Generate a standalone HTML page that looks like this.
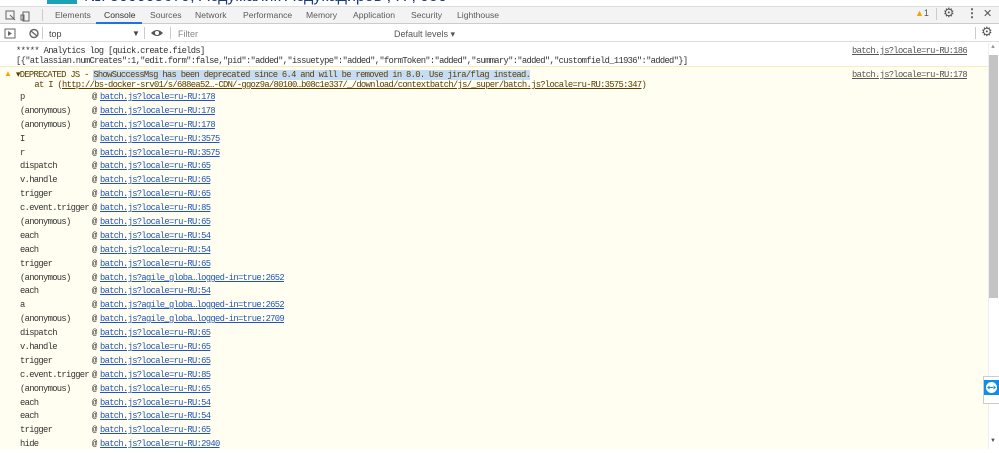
<!DOCTYPE html>
<html><head><meta charset="utf-8"><style>
*{margin:0;padding:0;box-sizing:border-box}
body{width:999px;height:449px;overflow:hidden;background:#fff;font-family:"Liberation Sans",sans-serif;position:relative}
.abs{position:absolute}
.tab{position:absolute;top:10px;font-size:8.6px;color:#5a5a5a}
.mono{font-family:"Liberation Mono",monospace;font-size:8.8px;letter-spacing:-0.68px;color:#333;white-space:pre}
a{color:#2255bb;text-decoration:underline}
.lnk{color:#555;text-decoration:underline}
.row{position:absolute;left:0;height:14px}
.row .n{position:absolute;left:20px}
.row .at{position:absolute;left:92px}
.row .l{position:absolute;left:100px}
</style></head><body>
<div class="abs" style="left:0;top:0;width:999px;height:6px;overflow:hidden;background:#fff">
 <div class="abs" style="left:47px;top:-2px;width:30px;height:6px;background:#1aa3b5"></div>
 <div class="abs" style="left:84px;top:-12px;font-size:16px;color:#1b3a7a;white-space:nowrap">№: 500005679, Абдумалик Абдукадиров ; П ; 990</div>
</div>
<div class="abs" style="left:0;top:6px;width:999px;height:18px;background:#f3f3f3;border-top:1px solid #ddd;border-bottom:1px solid #ccc"></div>
<svg class="abs" style="left:5px;top:9px" width="30" height="13"><rect x="1" y="2" width="8" height="8" fill="none" stroke="#666"/><path d="M5 6 L10 11" stroke="#666"/><rect x="18" y="3" width="6" height="9" fill="none" stroke="#666"/><rect x="16" y="6" width="3" height="5" fill="none" stroke="#666"/></svg>
<div class="abs" style="left:42px;top:9px;width:1px;height:12px;background:#ccc"></div>
<div class="tab" style="left:55px">Elements</div>
<div class="tab" style="left:104px;color:#333">Console</div>
<div class="abs" style="left:96px;top:22px;width:46px;height:2px;background:#1a73e8"></div>
<div class="tab" style="left:150px">Sources</div>
<div class="tab" style="left:195px">Network</div>
<div class="tab" style="left:243px">Performance</div>
<div class="tab" style="left:306px">Memory</div>
<div class="tab" style="left:353px">Application</div>
<div class="tab" style="left:411px">Security</div>
<div class="tab" style="left:457px">Lighthouse</div>
<div class="abs" style="left:915px;top:8px;font-size:9px;color:#555"><span style="color:#f2a600">▲</span>1</div>
<div class="abs" style="left:936px;top:8px;width:1px;height:12px;background:#ccc"></div>
<div class="abs" style="left:943px;top:5px;font-size:13px;color:#555">⚙</div>
<div class="abs" style="left:966px;top:6px;font-size:12px;color:#555;font-weight:bold">⋮</div>
<div class="abs" style="left:983px;top:7px;font-size:11px;color:#555">✕</div>
<div class="abs" style="left:0;top:24px;width:999px;height:18px;border-bottom:1px solid #ddd"></div>
<svg class="abs" style="left:4px;top:28px" width="40" height="12"><rect x="1" y="1" width="10" height="9" fill="none" stroke="#666"/><path d="M4 3 L4 8 L8 5.5Z" fill="#666"/><circle cx="30" cy="5.5" r="4" fill="none" stroke="#666" stroke-width="1.4"/><path d="M27 3 L33 8" stroke="#666" stroke-width="1.4"/></svg>
<div class="abs" style="left:42px;top:27px;width:1px;height:12px;background:#ccc"></div>
<div class="abs" style="left:49px;top:29px;font-size:9px;color:#444">top</div>
<div class="abs" style="left:132px;top:29px;font-size:8px;color:#444">▼</div>
<div class="abs" style="left:144px;top:27px;width:1px;height:12px;background:#ccc"></div>
<svg class="abs" style="left:150px;top:28px" width="14" height="10"><path d="M1 5 Q7 -1 13 5 Q7 11 1 5Z" fill="#555"/><circle cx="7" cy="5" r="2" fill="#fff"/></svg>
<div class="abs" style="left:170px;top:27px;width:1px;height:12px;background:#ccc"></div>
<div class="abs" style="left:178px;top:29px;font-size:9px;color:#888">Filter</div>
<div class="abs" style="left:394px;top:29px;font-size:9px;color:#555">Default levels ▾</div>
<div class="abs" style="left:975px;top:27px;width:1px;height:12px;background:#ccc"></div>
<div class="abs" style="left:981px;top:24px;font-size:13px;color:#555">⚙</div>

<div class="abs mono" style="left:16px;top:46px">***** Analytics log [quick.create.fields]</div>
<div class="abs mono" style="left:16px;top:56px">[{"atlassian.numCreates":1,"edit.form":false,"pid":"added","issuetype":"added","formToken":"added","summary":"added","customfield_11936":"added"}]</div>
<div class="abs mono lnk" style="left:852px;top:46px">batch.js?locale=ru-RU:186</div>
<div class="abs" style="left:0;top:66px;width:988px;height:383px;background:#fffef0;border-top:1px solid #f5eec0"></div>
<div class="abs" style="left:4px;top:69px;font-size:8px;color:#f2a600">▲</div>
<div class="abs mono" style="left:16px;top:70px;color:#5c3c00">▾DEPRECATED JS - <span style="background:#c5dcf5">ShowSuccessMsg has been deprecated since 6.4 and will be removed in 8.0. Use jira/flag instead.</span></div>
<div class="abs mono" style="left:16px;top:80px;color:#5c3c00">    at I (<span class="lnk" style="color:#5c3c00">http://bs-docker-srv01/s/688ea52…-CDN/-ggoz9a/80100…b08c1e337/_/download/contextbatch/js/_super/batch.js?locale=ru-RU:3575:347</span>)</div>
<div class="abs mono lnk" style="left:852px;top:70px">batch.js?locale=ru-RU:178</div>

<div class="mono">
<div class="row" style="top:92px"><span class="n">p</span><span class="at">@</span><a class="l">batch.js?locale=ru-RU:178</a></div>
<div class="row" style="top:106px"><span class="n">(anonymous)</span><span class="at">@</span><a class="l">batch.js?locale=ru-RU:178</a></div>
<div class="row" style="top:120px"><span class="n">(anonymous)</span><span class="at">@</span><a class="l">batch.js?locale=ru-RU:178</a></div>
<div class="row" style="top:134px"><span class="n">I</span><span class="at">@</span><a class="l">batch.js?locale=ru-RU:3575</a></div>
<div class="row" style="top:148px"><span class="n">r</span><span class="at">@</span><a class="l">batch.js?locale=ru-RU:3575</a></div>
<div class="row" style="top:161px"><span class="n">dispatch</span><span class="at">@</span><a class="l">batch.js?locale=ru-RU:65</a></div>
<div class="row" style="top:175px"><span class="n">v.handle</span><span class="at">@</span><a class="l">batch.js?locale=ru-RU:65</a></div>
<div class="row" style="top:189px"><span class="n">trigger</span><span class="at">@</span><a class="l">batch.js?locale=ru-RU:65</a></div>
<div class="row" style="top:203px"><span class="n">c.event.trigger</span><span class="at">@</span><a class="l">batch.js?locale=ru-RU:85</a></div>
<div class="row" style="top:217px"><span class="n">(anonymous)</span><span class="at">@</span><a class="l">batch.js?locale=ru-RU:65</a></div>
<div class="row" style="top:231px"><span class="n">each</span><span class="at">@</span><a class="l">batch.js?locale=ru-RU:54</a></div>
<div class="row" style="top:245px"><span class="n">each</span><span class="at">@</span><a class="l">batch.js?locale=ru-RU:54</a></div>
<div class="row" style="top:259px"><span class="n">trigger</span><span class="at">@</span><a class="l">batch.js?locale=ru-RU:65</a></div>
<div class="row" style="top:273px"><span class="n">(anonymous)</span><span class="at">@</span><a class="l">batch.js?agile_globa…logged-in=true:2652</a></div>
<div class="row" style="top:286px"><span class="n">each</span><span class="at">@</span><a class="l">batch.js?locale=ru-RU:54</a></div>
<div class="row" style="top:300px"><span class="n">a</span><span class="at">@</span><a class="l">batch.js?agile_globa…logged-in=true:2652</a></div>
<div class="row" style="top:314px"><span class="n">(anonymous)</span><span class="at">@</span><a class="l">batch.js?agile_globa…logged-in=true:2709</a></div>
<div class="row" style="top:328px"><span class="n">dispatch</span><span class="at">@</span><a class="l">batch.js?locale=ru-RU:65</a></div>
<div class="row" style="top:342px"><span class="n">v.handle</span><span class="at">@</span><a class="l">batch.js?locale=ru-RU:65</a></div>
<div class="row" style="top:356px"><span class="n">trigger</span><span class="at">@</span><a class="l">batch.js?locale=ru-RU:65</a></div>
<div class="row" style="top:370px"><span class="n">c.event.trigger</span><span class="at">@</span><a class="l">batch.js?locale=ru-RU:85</a></div>
<div class="row" style="top:384px"><span class="n">(anonymous)</span><span class="at">@</span><a class="l">batch.js?locale=ru-RU:65</a></div>
<div class="row" style="top:398px"><span class="n">each</span><span class="at">@</span><a class="l">batch.js?locale=ru-RU:54</a></div>
<div class="row" style="top:411px"><span class="n">each</span><span class="at">@</span><a class="l">batch.js?locale=ru-RU:54</a></div>
<div class="row" style="top:425px"><span class="n">trigger</span><span class="at">@</span><a class="l">batch.js?locale=ru-RU:65</a></div>
<div class="row" style="top:439px"><span class="n">hide</span><span class="at">@</span><a class="l">batch.js?locale=ru-RU:2940</a></div>
</div>

<div class="abs" style="left:988px;top:43px;width:11px;height:406px;background:#fff;border-left:1px solid #eee"></div>
<div class="abs" style="left:990px;top:44px;font-size:6px;color:#999">▲</div>
<div class="abs" style="left:989px;top:55px;width:9px;height:243px;background:#c4c4c4"></div>
<div class="abs" style="left:990px;top:438px;font-size:6px;color:#555">▼</div>
<div class="abs" style="left:983px;top:376px;width:16px;height:28px;background:#fff;border:1px solid #ccc;border-right:none"></div>
<svg class="abs" style="left:984px;top:380px" width="15" height="15"><rect width="15" height="15" fill="#0e8ee9"/><circle cx="7.5" cy="7.5" r="5.5" fill="#fff"/><path d="M3 7.5 L5.5 5.5 V9.5Z M12 7.5 L9.5 5.5 V9.5Z M5 7 H10 V8 H5Z" fill="#0e8ee9"/></svg>
</body></html>
